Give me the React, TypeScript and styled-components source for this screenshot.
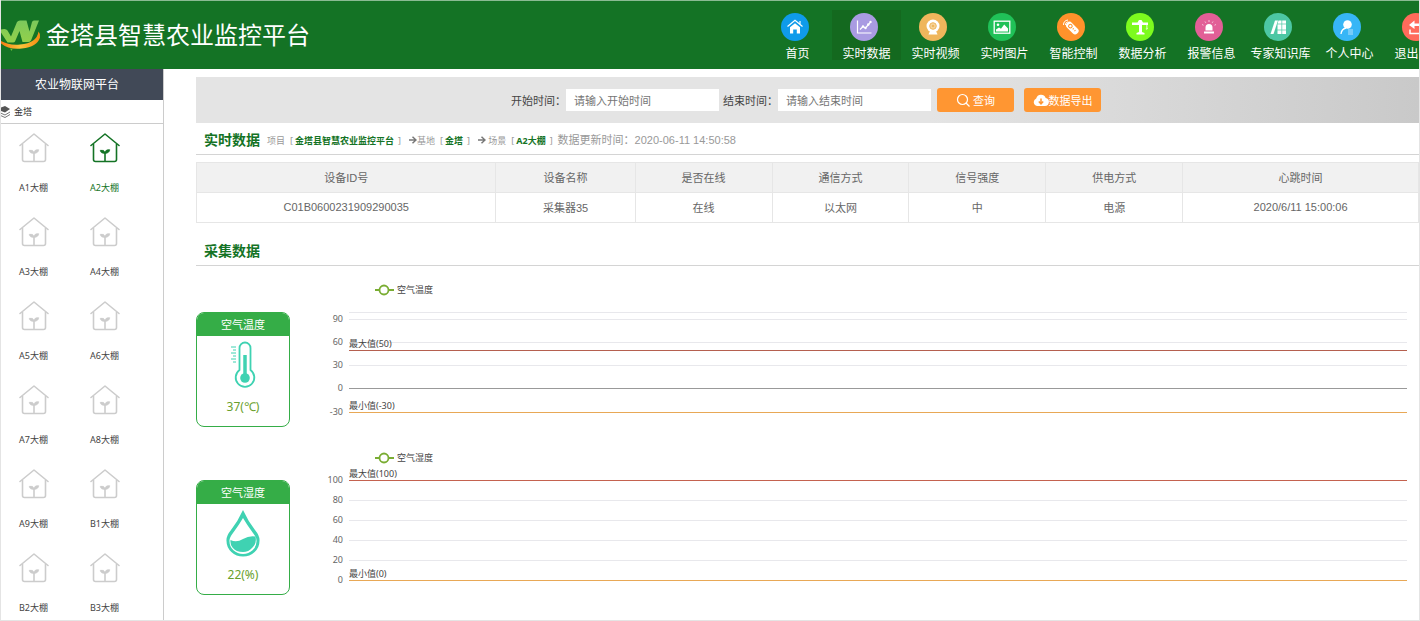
import React from "react";
import styled, { createGlobalStyle } from "styled-components";

const SANS = `"Noto Sans", "Noto Sans CJK SC", sans-serif`;
const ARIAL = `"Liberation Sans", "Noto Sans CJK SC", sans-serif`;

const GlobalStyle = createGlobalStyle`
  * { box-sizing: border-box; }
  body { margin: 0; background: #fff; font-family: ${SANS}; color: #666; }
  a { text-decoration: none; color: inherit; }
  button, input { font-family: inherit; }
  h1, h2, ul { margin: 0; padding: 0; }
`;

const Page = styled.div`
  display: flex;
  flex-direction: column;
  height: 100vh;
  overflow: hidden;
  border: solid #e4e4e4;
  border-width: 0 1px 1px;
`;

const Header = styled.header`
  display: flex;
  flex: none;
  align-items: center;
  justify-content: space-between;
  height: 69px;
  overflow: hidden;
  background: #147325;
  border-top: 1px solid #8abb93;
`;

const Brand = styled.div`
  display: flex;
  align-items: center;
  flex: none;
  gap: 5px;
`;

const BrandTitle = styled.h1`
  font-size: 24px;
  font-weight: 400;
  line-height: 32px;
  color: #fff;
  white-space: nowrap;
`;

const Nav = styled.nav`
  display: flex;
  flex: none;
  margin-right: -34px;
`;

const NavItem = styled.a<{ $active?: boolean }>`
  display: flex;
  flex-direction: column;
  align-items: center;
  gap: 2px;
  width: 69px;
  height: 50px;
  padding-top: 3px;
  font-size: 12px;
  line-height: 22px;
  color: #fff;
  white-space: nowrap;
  background: ${(p) => (p.$active ? "#14691f" : "transparent")};
`;

const NavBadge = styled.span<{ $color: string }>`
  display: flex;
  flex: none;
  align-items: center;
  justify-content: center;
  width: 28px;
  height: 28px;
  margin-right: 6px;
  border-radius: 50%;
  background: ${(p) => p.$color};
`;

const Body = styled.div`
  display: flex;
  flex: 1;
  min-height: 0;
`;

const Sidebar = styled.aside`
  flex: none;
  width: 163px;
  overflow: hidden;
  border-right: 1px solid #ccc;
`;

const SidebarHead = styled.div`
  height: 31px;
  padding-right: 10px;
  background: #414957;
  color: #fff;
  font-size: 12px;
  line-height: 31px;
  text-align: center;
`;

const BaseRow = styled.div`
  display: flex;
  align-items: center;
  gap: 4px;
  height: 24px;
  border-bottom: 1px solid #ccc;
  font-size: 9px;
  color: #333;
`;

const HouseList = styled.ul`
  display: grid;
  grid-template-columns: 71px 71px;
  grid-auto-rows: 84px;
  padding: 9px 0 0;
  margin-left: -3px;
  list-style: none;
`;

const HouseLink = styled.a<{ $active?: boolean }>`
  display: flex;
  flex-direction: column;
  align-items: center;
  gap: 18px;
  font-size: 9px;
  line-height: 14px;
  color: ${(p) => (p.$active ? "#147325" : "#444")};
  svg { color: ${(p) => (p.$active ? "#147325" : "#ccc")}; }
`;

const Main = styled.main`
  flex: 1;
  min-width: 0;
  padding: 8px 0 0 32px;
  overflow: hidden;
`;

const SearchBar = styled.form`
  display: flex;
  align-items: center;
  justify-content: center;
  height: 46px;
  padding-right: 3px;
  background: linear-gradient(90deg, #e4e4e4 0%, #e4e4e4 60%, #c9c9c9 100%);
  font-size: 11px;
  color: #444;
`;

const Field = styled.label`
  display: flex;
  align-items: center;
  margin-right: 4px;
  white-space: nowrap;
`;

const DateInput = styled.input`
  width: 153px;
  height: 22px;
  padding: 0 8px;
  border: 0;
  background: #fff;
  font-size: 11px;
  color: #666;
  &::placeholder { color: #757575; opacity: 1; }
`;

const Actions = styled.div`
  display: flex;
  gap: 10px;
  margin-left: 2px;
`;

const ActionButton = styled.button<{ $gap: number }>`
  display: flex;
  align-items: center;
  justify-content: center;
  gap: ${(p) => p.$gap}px;
  width: 77px;
  height: 24px;
  padding: 0;
  border: 0;
  border-radius: 3px;
  background: #ff9632;
  color: #fff;
  font-size: 11px;
  white-space: nowrap;
`;

const SectionHead = styled.div<{ $height: number }>`
  display: flex;
  align-items: flex-end;
  height: ${(p) => p.$height}px;
  padding: 0 8px 4px;
  border-bottom: 1px solid #d4d4d4;
`;

const SectionTitle = styled.h2`
  flex: none;
  font-size: 14px;
  font-weight: 700;
  line-height: 20px;
  color: #147325;
`;

const Crumbs = styled.div`
  display: flex;
  align-items: center;
  height: 20px;
  padding-left: 7px;
  font-size: 9px;
  color: #999;
  white-space: nowrap;
  svg { margin-left: 8px; }
`;

const Bracket = styled.span`
  display: flex;
  gap: 2px;
  margin-left: 5px;
  strong { color: #147325; }
  span { margin-left: 2px; }
`;

const Updated = styled.span`
  margin-left: 5px;
  font-family: ${ARIAL};
  font-size: 11px;
  line-height: 20px;
`;

const DeviceTable = styled.table`
  width: 100%;
  margin-top: 7px;
  border-collapse: collapse;
  table-layout: fixed;
  font-family: ${ARIAL};
  font-size: 11px;
  th, td {
    height: 30px;
    padding: 0 0 2px;
    border: 1px solid #e6e6e6;
    text-align: center;
    font-weight: 400;
    color: #666;
  }
  th { background: #f1f1f1; }
`;

const Readings = styled.div`
  padding: 14px 12px 0 0;
`;

const Reading = styled.section`
  display: flex;
  gap: 32px;
  height: 168px;
`;

const Card = styled.div`
  display: flex;
  flex: none;
  flex-direction: column;
  align-items: center;
  width: 94px;
  height: 115px;
  margin-top: 32px;
  overflow: hidden;
  border: 1px solid #35ad47;
  border-radius: 8px;
`;

const CardTitle = styled.div`
  width: 100%;
  margin-bottom: 4px;
  background: #35ad47;
  color: #fff;
  font-size: 11px;
  line-height: 23px;
  text-align: center;
`;

const CardValue = styled.div`
  margin-top: 7px;
  font-size: 12px;
  line-height: 20px;
  color: #6a9f2c;
`;

const Plot = styled.svg`
  flex: 1;
  min-width: 0;
  height: 150px;
  font-family: ${SANS};
  font-size: 9px;
`;

const navItems: { label: string; color: string; icon: React.ReactNode }[] = [
  {
    label: "首页",
    color: "#0f9bea",
    icon: (
      <>
        <path d="M1.500 8.500 9 2.300l7.500 6.200M14 3v3" fill="none" stroke="#fff" strokeWidth="1.200" />
        <path d="M4 9.300 9 5.200l5 4.100V15.500h-3.200v-4H7.200v4H4z" fill="#fff" />
      </>
    ),
  },
  {
    label: "实时数据",
    color: "#a99be2",
    icon: (
      <g fill="none" stroke="#fff" strokeWidth="1.2">
        <path d="M2.500 2.500v12.500h14" />
        <path d="m5 11.500 3-3 2.500 1.500 3-3.500 2-2.500" />
        <g fill="#fff" stroke="none">
          <circle cx="8" cy="8.500" r="1.200" />
          <circle cx="10.500" cy="10" r="1.200" />
          <circle cx="13.300" cy="6.500" r="1.200" />
          <circle cx="15.500" cy="4" r="1.200" />
        </g>
      </g>
    ),
  },
  {
    label: "实时视频",
    color: "#efb65c",
    icon: (
      <>
        <circle cx="9" cy="8" r="6.500" fill="#fff" />
        <path d="M4.500 16.500 6 13h6l1.500 3.500z" fill="#fff" />
        <circle cx="9" cy="8" r="3.300" fill="#f6d49b" stroke="#efb65c" />
        <circle cx="9" cy="8" r="1.300" fill="#efb65c" />
      </>
    ),
  },
  {
    label: "实时图片",
    color: "#20c158",
    icon: (
      <>
        <rect x="1.200" y="3.200" width="15.600" height="12" fill="none" stroke="#fff" strokeWidth="1.300" />
        <circle cx="5" cy="6.800" r="1.300" fill="#fff" />
        <path d="M3 13.500v-2l3-2 2 1.200 3.200-4.200 3.800 4v3z" fill="#fff" />
      </>
    ),
  },
  {
    label: "智能控制",
    color: "#ff922b",
    icon: (
      <>
        <g transform="rotate(-45 10 10)">
          <rect x="6.800" y="3" width="6.800" height="14.500" rx="3" fill="#fff" />
          <circle cx="10.200" cy="7.500" r="1.800" fill="none" stroke="#ff922b" />
          <path d="M10.200 11v1M10.200 13.500v1" stroke="#ff922b" strokeWidth="1.400" />
        </g>
        <path d="M1.500 7q0-4.500 4.500-5M3.400 7q0-2.800 2.800-3.300" fill="none" stroke="#fff" />
      </>
    ),
  },
  {
    label: "数据分析",
    color: "#7dfb1e",
    icon: (
      <path
        d="M1 4.500h5.500L8 2h2.500L12 4.500h5V7h-.700v2.500q1 1 0 1.800-1.300.800-1.800-.500h1V7H11v7l2.500 1v1.500h-8V15L8 14V7H1z"
        fill="#fff"
      />
    ),
  },
  {
    label: "报警信息",
    color: "#e25f97",
    icon: (
      <>
        <path d="M5.500 12.500V9.500a3.500 3.500 0 0 1 7 0v3z" fill="#fff" />
        <path d="M4 13.500h10v2H4z" fill="#fff" />
        <path d="M9 2v2M5 3.500l.800 1.300M13 3.500l-.800 1.300M2 6.500l1.500.700M16 6.500l-1.500.700" stroke="#f5c6da" />
      </>
    ),
  },
  {
    label: "专家知识库",
    color: "#4dc7a4",
    icon: (
      <g fill="#fff">
        <path d="M6 2.500h3L4.500 16h-3z" />
        <path d="M9.500 2.500h3V16H8.500V6z" />
        <path d="M13.200 2.500H17V16h-3.800z" />
        <path d="M8 6h9M8 12h9" stroke="#4dc7a4" strokeWidth=".7" />
      </g>
    ),
  },
  {
    label: "个人中心",
    color: "#37b6f6",
    icon: (
      <>
        <circle cx="9.500" cy="6.500" r="4.300" fill="#fff" />
        <path d="M3 16q.500-5 5-6" fill="none" stroke="#fff" strokeWidth="1.300" />
        <path d="M10 12h5M10 14h5M10 16h5" stroke="#b5e2fb" strokeWidth="1.200" />
      </>
    ),
  },
  {
    label: "退出系统",
    color: "#ff6b5b",
    icon: (
      <>
        <path d="M2 7 7.500 2.500v3H12q3.500 0 3.500 4-1.500-1.500-3.500-1.500H7.500v3z" fill="#fff" />
        <path d="M3 11.500v4h12.500v-3" fill="none" stroke="#fff" strokeWidth="1.500" />
      </>
    ),
  },
];

const houses = ["A1", "A2", "A3", "A4", "A5", "A6", "A7", "A8", "A9", "B1", "B2", "B3"];

const deviceColumns = [
  { title: "设备ID号", value: "C01B0600231909290035", width: "24.5%" },
  { title: "设备名称", value: "采集器35", width: "11.4%" },
  { title: "是否在线", value: "在线", width: "11.2%" },
  { title: "通信方式", value: "以太网", width: "11.2%" },
  { title: "信号强度", value: "中", width: "11.2%" },
  { title: "供电方式", value: "电源", width: "11.2%" },
  { title: "心跳时间", value: "2020/6/11 15:00:06", width: "19.3%" },
];

const Logo = () => (
  <svg width="40" height="34" viewBox="0 0 40 34" aria-hidden="true">
    <defs>
      <linearGradient id="leaf" x1="0" y1="0" x2="0" y2="1">
        <stop offset="0" stopColor="#7cc85c" />
        <stop offset="1" stopColor="#93d04a" />
      </linearGradient>
      <linearGradient id="swoosh" x1="0" y1="0" x2="1" y2="0">
        <stop offset="0" stopColor="#f47b12" />
        <stop offset=".5" stopColor="#fbc43c" />
        <stop offset="1" stopColor="#f58a10" />
      </linearGradient>
    </defs>
    <path d="M0 11.500q5-1.500 6.500 1l3.500 6L16 4q1-1.500 3-1.500h6.500l3 11 2.500-9.500q.5-1.500 2-1.500H38L30 22.500q-1 1.500-3 1.500h-5.500L18.500 13 14 23.500q-.5 1-2 1H6.500L0 14.500z" fill="url(#leaf)" />
    <path d="M0 23q8 4.500 19 3.500 17-1.500 18.500-13 2 2 1.500 6-3 9.500-18 11-13 1.500-21-5z" fill="url(#swoosh)" />
    <path d="m9 30.500 2.500.500-1 2z" fill="#6fbf3c" />
  </svg>
);

const HouseIcon = () => (
  <svg width="30" height="30" viewBox="0 0 30 30" fill="none" stroke="currentColor" strokeWidth="1.6" aria-hidden="true">
    <path d="M1 12.500 15 1l14 11.500" strokeLinecap="round" strokeLinejoin="round" />
    <path d="M3.500 11v15.500q0 2 2 2h19q2 0 2-2V11" />
    <path d="M15 28v-8.500" />
    <path d="M15 20.500q-4.500 0-4.800-3.200 4-.800 4.800 2 .800-3.300 4.800-2.600-.300 3.300-4.800 3.800z" fill="currentColor" strokeWidth=".6" />
  </svg>
);

const LayersIcon = () => (
  <svg width="9" height="12" viewBox="0 0 9 12" aria-hidden="true">
    <path d="M0 1.500 4 0l5 3-5 3.500L0 5z" fill="#555" />
    <path d="M0 7.200 4 9l5-3M0 9.700l4 1.800 5-3" fill="none" stroke="#777" />
  </svg>
);

const ArrowIcon = () => (
  <svg width="8" height="8" viewBox="0 0 8 8" fill="none" stroke="#777" strokeWidth="1.500" aria-hidden="true">
    <path d="M0 4h7M3.500.8 7 4 3.500 7.200" />
  </svg>
);

const SearchIcon = () => (
  <svg width="14" height="14" viewBox="0 0 14 14" fill="none" stroke="#fff" strokeWidth="1.200" aria-hidden="true">
    <circle cx="6.500" cy="6.500" r="5" />
    <path d="m10 10 3.500 3.500" />
  </svg>
);

const CloudIcon = () => (
  <svg width="16" height="14" viewBox="0 0 16 14" aria-hidden="true">
    <path d="M4 13a4 4 0 0 1-.800-7.600 5 5 0 0 1 9.500-.500A4.100 4.100 0 0 1 12 13z" fill="#fff" />
    <path d="M8 5.500v5M5.800 8.500 8 10.800l2.200-2.300" fill="none" stroke="#ff9632" strokeWidth="1.500" />
  </svg>
);

const ThermometerIcon = () => (
  <svg width="32" height="50" viewBox="0 0 32 50" fill="none" stroke="#3fd2b2" aria-hidden="true">
    <path d="M12.500 30V8a5.500 5.500 0 0 1 11 0v22a9.300 9.300 0 1 1-11 0z" strokeWidth="1.800" />
    <path d="M18 15v24" strokeWidth="3.500" />
    <circle cx="18" cy="38" r="4.800" fill="#3fd2b2" stroke="none" />
    <path d="M4 7h5M6 10h3M4 13h5M6 16h3M4 19h5M6 22h3" />
  </svg>
);

const DropIcon = () => (
  <svg width="36" height="50" viewBox="0 0 36 50" aria-hidden="true">
    <path d="M18 2Q23 13 30 22q5 6 4.500 11a16.500 15.500 0 0 1-33 0q-.500-5 4.500-11Q13 13 18 2z" fill="#3fd2b2" />
    <path d="M18 10Q22 17 28 25q4 5 3.500 8.500a13.500 12.500 0 0 1-27 0Q4 30 8 25 14 17 18 10z" fill="#fff" />
    <path d="M5.500 32q6 3 12.500-1 6-3.500 12.500-2.500 1.500 7-3 11-4 4.500-9.500 4.500-7 0-10.500-4.500-2.500-3-2-7.500z" fill="#3fd2b2" />
  </svg>
);

type Mark = { label: string; value: number; color: string };

type ChartProps = {
  name: string;
  top: number;
  bottom: number;
  ticks: number[];
  marks: Mark[];
};

const PLOT_TOP = 32;
const PLOT_HEIGHT = 100;
const AXIS_X = 27;

const Chart = ({ name, top, bottom, ticks, marks }: ChartProps) => {
  const y = (value: number) => Math.floor(PLOT_TOP + ((top - value) / (top - bottom)) * PLOT_HEIGHT);
  const marked = marks.map((m) => m.value);
  const gridValues = [...new Set([top, ...ticks])].filter((v) => !marked.includes(v));
  return (
    <Plot role="img" aria-label={name}>
      <path d="M53 10h19" stroke="#7aad33" strokeWidth="2" />
      <circle cx="62" cy="10" r="4.500" fill="#fff" stroke="#7aad33" strokeWidth="1.800" />
      <text x="75" y="13" fill="#444">{name}</text>
      <g shapeRendering="crispEdges">
        {gridValues.map((v) => (
          <rect key={v} x={AXIS_X} y={y(v)} width="100%" height="1" fill={v === 0 ? "#999" : "#e8e8ec"} />
        ))}
        {marks.map((m) => (
          <rect key={m.label} x={AXIS_X} y={y(m.value)} width="100%" height="1" fill={m.color} />
        ))}
      </g>
      {ticks.map((t) => (
        <text key={t} x="21" y={y(t) + 3} textAnchor="end" fill="#666">{t}</text>
      ))}
      {marks.map((m) => (
        <text key={m.label} x={AXIS_X} y={y(m.value) - 3} fill="#444">{`${m.label}(${m.value})`}</text>
      ))}
    </Plot>
  );
};

export default function App() {
  return (
    <Page>
      <GlobalStyle />
      <Header>
        <Brand>
          <Logo />
          <BrandTitle>金塔县智慧农业监控平台</BrandTitle>
        </Brand>
        <Nav>
          {navItems.map((item) => (
            <NavItem key={item.label} href="#" $active={item.label === "实时数据"}>
              <NavBadge $color={item.color}>
                <svg width="18" height="18" viewBox="0 0 18 18" aria-hidden="true">{item.icon}</svg>
              </NavBadge>
              {item.label}
            </NavItem>
          ))}
        </Nav>
      </Header>
      <Body>
        <Sidebar>
          <SidebarHead>农业物联网平台</SidebarHead>
          <BaseRow>
            <LayersIcon />
            金塔
          </BaseRow>
          <HouseList>
            {houses.map((house) => (
              <li key={house}>
                <HouseLink href="#" $active={house === "A2"}>
                  <HouseIcon />
                  {`${house}大棚`}
                </HouseLink>
              </li>
            ))}
          </HouseList>
        </Sidebar>
        <Main>
          <SearchBar>
            <Field>
              开始时间：
              <DateInput type="text" placeholder="请输入开始时间" />
            </Field>
            <Field>
              结束时间：
              <DateInput type="text" placeholder="请输入结束时间" />
            </Field>
            <Actions>
              <ActionButton type="button" $gap={3}>
                <SearchIcon />
                查询
              </ActionButton>
              <ActionButton type="button" $gap={0}>
                <CloudIcon />
                数据导出
              </ActionButton>
            </Actions>
          </SearchBar>
          <SectionHead $height={32}>
            <SectionTitle>实时数据</SectionTitle>
            <Crumbs>
              项目
              <Bracket>[<strong>金塔县智慧农业监控平台</strong><span>]</span></Bracket>
              <ArrowIcon />
              基地
              <Bracket>[<strong>金塔</strong><span>]</span></Bracket>
              <ArrowIcon />
              &nbsp;场景
              <Bracket>[<strong>A2大棚</strong><span>]</span></Bracket>
              <Updated>数据更新时间：2020-06-11 14:50:58</Updated>
            </Crumbs>
          </SectionHead>
          <DeviceTable>
            <colgroup>
              {deviceColumns.map((c) => (
                <col key={c.title} width={c.width} />
              ))}
            </colgroup>
            <thead>
              <tr>
                {deviceColumns.map((c) => (
                  <th key={c.title} scope="col">{c.title}</th>
                ))}
              </tr>
            </thead>
            <tbody>
              <tr>
                {deviceColumns.map((c) => (
                  <td key={c.title}>{c.value}</td>
                ))}
              </tr>
            </tbody>
          </DeviceTable>
          <SectionHead $height={43}>
            <SectionTitle>采集数据</SectionTitle>
          </SectionHead>
          <Readings>
            <Reading>
              <Card>
                <CardTitle>空气温度</CardTitle>
                <ThermometerIcon />
                <CardValue>37(℃)</CardValue>
              </Card>
              <Chart
                name="空气温度"
                top={100}
                bottom={-30}
                ticks={[90, 60, 30, 0, -30]}
                marks={[
                  { label: "最大值", value: 50, color: "#b5604f" },
                  { label: "最小值", value: -30, color: "#e8a856" },
                ]}
              />
            </Reading>
            <Reading>
              <Card>
                <CardTitle>空气湿度</CardTitle>
                <DropIcon />
                <CardValue>22(%)</CardValue>
              </Card>
              <Chart
                name="空气湿度"
                top={100}
                bottom={0}
                ticks={[80, 60, 40, 20, 0, 100]}
                marks={[
                  { label: "最大值", value: 100, color: "#c4624f" },
                  { label: "最小值", value: 0, color: "#e8a856" },
                ]}
              />
            </Reading>
          </Readings>
        </Main>
      </Body>
    </Page>
  );
}
